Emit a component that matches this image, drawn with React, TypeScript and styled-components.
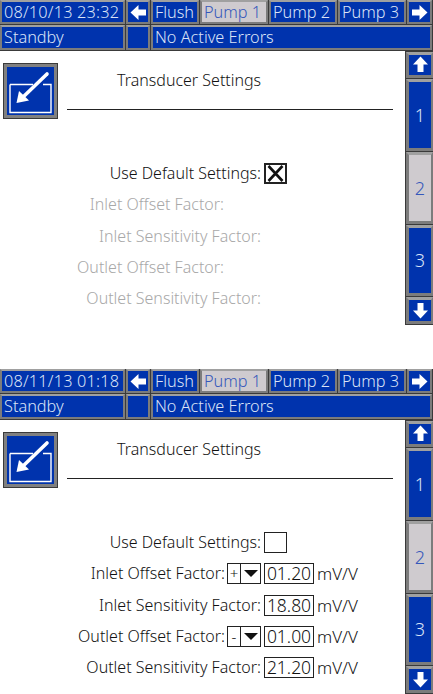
import React from "react";
import styled, { createGlobalStyle } from "styled-components";

const Global = createGlobalStyle`
  html, body { margin: 0; padding: 0; background: #fff; }
  body { width: 433px; height: 694px; overflow: hidden; font-family: "Noto Sans", "DejaVu Sans", sans-serif; font-weight: 300; }
`;

const Page = styled.div`
  display: flex;
  flex-direction: column;
  gap: 44px;
  width: 433px;
`;

const ScreenFrame = styled.section`
  display: flex;
  flex-direction: column;
  height: 325px;
`;

const Header = styled.header`
  display: grid;
  grid-template-columns: 126px 25px 49px 69px 69px 69px 26px;
  grid-template-rows: 25px 26px;
  background: #3a3a3a;
  height: 51px;
  flex: none;
`;

const Cell = styled.div<{ $active?: boolean; $span?: number }>`
  box-sizing: border-box;
  display: flex;
  align-items: center;
  grid-column: span ${(p) => p.$span ?? 1};
  margin: 0 1px 1px 0;
  padding: 0 0 0 2px;
  border: 2px solid #7c7c7c;
  border-top-color: #a0a0a0;
  background: ${(p) => (p.$active ? "#cfcbcf" : "#0033ad")};
  color: ${(p) => (p.$active ? "#3557bb" : "#dbe3f7")};
  font-size: 16.3px;
  line-height: 1;
  white-space: nowrap;
  overflow: hidden;
`;

const DateCell = styled(Cell)`
  letter-spacing: 0.2px;
`;

const IconCell = styled(Cell)`
  justify-content: center;
  padding: 0;
`;

const Body = styled.div`
  flex: 1;
  display: flex;
  min-height: 0;
`;

const Main = styled.main`
  flex: 1;
  display: flex;
  flex-direction: column;
  background: #fff;
  padding: 12px 0 0 3px;
  box-sizing: border-box;
`;

const TitleRow = styled.div`
  display: flex;
  gap: 9px;
  height: 56px;
`;

const IconButton = styled.div`
  box-sizing: border-box;
  width: 55px;
  height: 56px;
  flex: none;
  border: 1px solid #3a3a3a;
  background: #0033ad;
  box-shadow: inset 0 0 0 3px #808080;
  display: flex;
  align-items: center;
  justify-content: center;
`;

const TitleBlock = styled.div`
  flex: none;
  width: 326px;
  height: 46px;
  border-bottom: 1px solid #222;
`;

const Title = styled.h1`
  margin: 7px 0 0 50px;
  font-weight: 300;
  font-size: 16px;
  line-height: 20px;
  color: #111;
`;

const Form = styled.div`
  display: flex;
  flex-direction: column;
  margin-top: 44px;
  gap: 10.35px;
`;

const Row = styled.div`
  display: flex;
  align-items: center;
  height: 21px;
`;

const LabelCell = styled.div`
  width: 258px;
  flex: none;
  display: flex;
  justify-content: flex-end;
  align-items: center;
  gap: 2px;
`;

const Label = styled.span<{ $off?: boolean; $indent?: number }>`
  font-size: 16px;
  line-height: 21px;
  white-space: nowrap;
  color: ${(p) => (p.$off ? "#a8a8a8" : "#111")};
  margin-right: ${(p) => p.$indent ?? 0}px;
`;

const CheckBox = styled.div<{ $checked?: boolean }>`
  box-sizing: border-box;
  width: 23px;
  height: 21px;
  margin-left: 3px;
  border: ${(p) => (p.$checked ? 2 : 1)}px solid #222;
  display: flex;
  align-items: center;
  justify-content: center;
`;

const Select = styled.div`
  box-sizing: border-box;
  width: 34px;
  height: 21px;
  border: 1px solid #222;
  display: flex;
  font-size: 15px;
  color: #111;
`;

const SelectSign = styled.span`
  width: 12px;
  border-right: 1px solid #222;
  text-align: center;
  line-height: 18px;
`;

const SelectArrow = styled.span`
  flex: 1;
  display: flex;
  align-items: center;
  justify-content: center;
`;

const ValueBox = styled.div`
  box-sizing: border-box;
  width: 50px;
  height: 21px;
  margin-left: 3px;
  border: 1px solid #222;
  font-size: 17.5px;
  line-height: 18px;
  text-align: center;
  color: #111;
`;

const Unit = styled.span`
  margin-left: 3px;
  font-size: 17px;
  color: #111;
`;

const Side = styled.nav`
  width: 28px;
  flex: none;
  display: flex;
  flex-direction: column;
  background: #3a3a3a;
  padding: 1px 0 0 1px;
  box-sizing: border-box;
`;

const SideCell = styled.div<{ $h: number; $active?: boolean }>`
  box-sizing: border-box;
  height: ${(p) => p.$h}px;
  margin-bottom: 1px;
  border: 3px solid #7c7c7c;
  border-top-color: #a0a0a0;
  border-right-width: 2px;
  background: ${(p) => (p.$active ? "#cfcbcf" : "#0033ad")};
  color: ${(p) => (p.$active ? "#3557bb" : "#dbe3f7")};
  display: flex;
  align-items: center;
  justify-content: center;
  font-size: 18px;
`;

const Arrow = ({ dir }: { dir: "left" | "right" | "up" | "down" }) => {
  const rot = { left: 0, right: 180, up: 90, down: 270 }[dir];
  return (
    <svg width="17" height="17" viewBox="0 0 17 17" style={{ transform: `rotate(${rot}deg)` }}>
      <path d="M0.5 8.5 L8.5 1 V5.5 H16 V11.5 H8.5 V16 Z" fill="#fff" />
    </svg>
  );
};

const EditIcon = () => (
  <svg width="47" height="47" viewBox="0 0 47 47">
    <path d="M3 16.5 H26 M36 16.5 H44 V44.5 H3 V16.5" fill="none" stroke="#fff" strokeWidth="1.4" />
    <path d="M40 6 L14 31" stroke="#fff" strokeWidth="3.6" strokeLinecap="round" />
    <path d="M9.5 35 L12 23 L22 32.5 Z" fill="#fff" />
  </svg>
);

const DownTriangle = () => (
  <svg width="14" height="7" viewBox="0 0 14 7">
    <path d="M0 0 H14 L7 7 Z" fill="#111" />
  </svg>
);

const CrossMark = () => (
  <svg width="17" height="17" viewBox="0 0 17 17">
    <path d="M1.5 1 L15.5 16 M15.5 1 L1.5 16" stroke="#111" strokeWidth="2.6" />
  </svg>
);

type FieldData = { sign?: string; value: string };

type ScreenProps = {
  date: string;
  checked: boolean;
  fields?: FieldData[];
};

const LABELS = [
  "Inlet Offset Factor:",
  "Inlet Sensitivity Factor:",
  "Outlet Offset Factor:",
  "Outlet Sensitivity Factor:",
];

const Screen = ({ date, checked, fields }: ScreenProps) => (
  <ScreenFrame>
    <Header>
      <DateCell>{date}</DateCell>
      <IconCell><Arrow dir="left" /></IconCell>
      <Cell>Flush</Cell>
      <Cell $active>Pump 1</Cell>
      <Cell>Pump 2</Cell>
      <Cell>Pump 3</Cell>
      <IconCell><Arrow dir="right" /></IconCell>
      <Cell>Standby</Cell>
      <Cell />
      <Cell $span={5}>No Active Errors</Cell>
    </Header>
    <Body>
      <Main>
        <TitleRow>
          <IconButton><EditIcon /></IconButton>
          <TitleBlock><Title>Transducer Settings</Title></TitleBlock>
        </TitleRow>
        <Form>
          <Row>
            <LabelCell><Label>Use Default Settings:</Label></LabelCell>
            <CheckBox $checked={checked}>{checked && <CrossMark />}</CheckBox>
          </Row>
          {LABELS.map((label, i) => {
            const f = fields?.[i];
            const offset = i % 2 === 0;
            return (
              <Row key={label}>
                <LabelCell>
                  <Label $off={!f} $indent={!f && offset ? 37 : 0}>{label}</Label>
                  {f?.sign && (
                    <Select>
                      <SelectSign>{f.sign}</SelectSign>
                      <SelectArrow><DownTriangle /></SelectArrow>
                    </Select>
                  )}
                </LabelCell>
                {f && (
                  <>
                    <ValueBox>{f.value}</ValueBox>
                    <Unit>mV/V</Unit>
                  </>
                )}
              </Row>
            );
          })}
        </Form>
      </Main>
      <Side>
        <SideCell $h={26}><Arrow dir="up" /></SideCell>
        <SideCell $h={73}>1</SideCell>
        <SideCell $h={72} $active>2</SideCell>
        <SideCell $h={72}>3</SideCell>
        <SideCell $h={27}><Arrow dir="down" /></SideCell>
      </Side>
    </Body>
  </ScreenFrame>
);

export default function App() {
  return (
    <Page>
      <Global />
      <Screen date="08/10/13 23:32" checked={true} />
      <Screen
        date="08/11/13 01:18"
        checked={false}
        fields={[
          { sign: "+", value: "01.20" },
          { value: "18.80" },
          { sign: "-", value: "01.00" },
          { value: "21.20" },
        ]}
      />
    </Page>
  );
}
